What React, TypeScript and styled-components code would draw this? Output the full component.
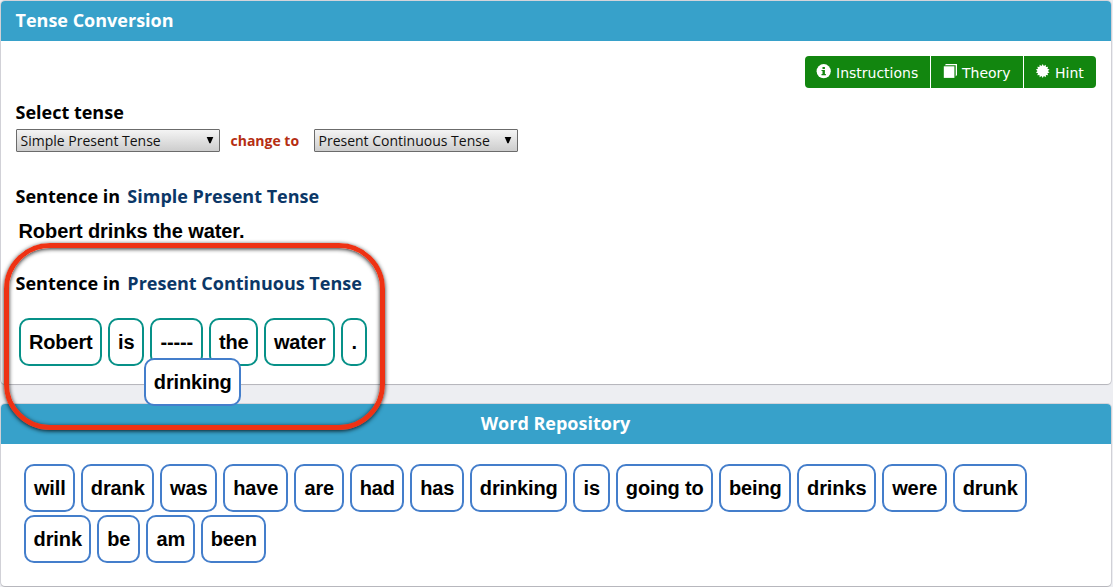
import React from "react";
import styled, { createGlobalStyle } from "styled-components";

const GlobalStyle = createGlobalStyle`
  * { box-sizing: border-box; }
  body {
    margin: 0;
    background: #edeef2;
    font-family: "Open Sans", "Noto Sans", sans-serif;
    color: #000;
  }
`;

const Page = styled.main`
  position: relative;
  display: flex;
  flex-direction: column;
  gap: 20px;
  height: 587px;
  padding: 1px 2px 1px 1px;
  overflow: hidden;
`;

const Panel = styled.section<{ $height: number }>`
  height: ${(p) => p.$height}px;
  background: #fff;
  border-radius: 4px;
  box-shadow: 0 1px 1px rgba(0, 0, 0, 0.15), 0 0 0 1px #d4d4da;
`;

const PanelHeader = styled.h2<{ $center?: boolean }>`
  margin: 0;
  height: 40px;
  padding: ${(p) => (p.$center ? "0 16px 0 15px" : "0 15px 0 14.5px")};
  border-radius: 4px 4px 0 0;
  background: #37a1ca;
  color: #fff;
  font-size: 18px;
  font-weight: 700;
  line-height: 39px;
  text-align: ${(p) => (p.$center ? "center" : "left")};
`;

const PanelBody = styled.div`
  padding: 15px;
`;

const ButtonGroup = styled.div`
  display: flex;
  justify-content: flex-end;
  gap: 1px;
`;

const HelpButton = styled.button<{ $width: number }>`
  display: flex;
  align-items: center;
  gap: 5px;
  width: ${(p) => p.$width}px;
  height: 32px;
  padding: 1px 0 0 11px;
  border: 0;
  background: #12860f;
  color: #fff;
  font: 400 14px/20px "DejaVu Sans", sans-serif;
  white-space: nowrap;
  svg { flex: none; margin-top: -3px; }
  &:first-child { border-radius: 4px 0 0 4px; }
  &:last-child { border-radius: 0 4px 4px 0; }
`;

const Heading = styled.h3<{ $top: number }>`
  display: flex;
  gap: 7.3px;
  margin: ${(p) => p.$top}px 0 0 -0.5px;
  font-size: 18px;
  font-weight: 700;
  line-height: 24px;
  white-space: nowrap;
`;

const TenseName = styled.span`
  color: #0b3767;
`;

const TenseRow = styled.div`
  display: flex;
  align-items: center;
  margin-top: 5px;
`;

const Select = styled.div`
  display: flex;
  align-items: center;
  justify-content: space-between;
  width: 204px;
  height: 23px;
  padding: 0 5px 0 3.5px;
  border: 1px solid #6b6b6b;
  border-radius: 1px;
  background: linear-gradient(#f4f4f4, #cdcdcd);
  color: #111;
  font-size: 14px;
  line-height: 21px;
  white-space: nowrap;
`;

const ChangeTo = styled.span`
  width: 94px;
  padding-left: 10.5px;
  color: #b52e12;
  font-size: 14px;
  font-weight: 700;
  line-height: 20px;
`;

const Sentence = styled.p`
  margin: 11px 0 0 2.5px;
  font: 700 20px/24px "Liberation Sans", Arial, sans-serif;
  letter-spacing: -0.08px;
`;

const Words = styled.div<{ $repository?: boolean }>`
  display: flex;
  flex-wrap: wrap;
  gap: 3px 6px;
  margin: ${(p) => (p.$repository ? "5px 30px 0 8px" : "23px 0 0 3px")};
`;

const Tile = styled.div<{ $width: number; $color: string }>`
  flex: none;
  width: ${(p) => p.$width}px;
  height: 48px;
  padding-left: 0.5px;
  border: 2px solid ${(p) => p.$color};
  border-radius: 10px;
  background: #fff;
  font: 700 20px/44px "Liberation Sans", Arial, sans-serif;
  letter-spacing: -0.12px;
  text-align: center;
  white-space: nowrap;
`;

const DraggedTile = styled(Tile)`
  position: absolute;
  left: 144px;
  top: 358px;
  z-index: 2;
`;

const Callout = styled.div`
  position: absolute;
  z-index: 1;
  left: 4px;
  top: 243px;
  width: 381px;
  height: 187px;
  border: 5px solid #ee3214;
  border-radius: 46px;
  box-shadow: 0 1px 4px rgba(0, 0, 0, 0.85), inset 0 1px 4px rgba(0, 0, 0, 0.85);
  pointer-events: none;
`;

const TEAL = "#079188";
const BLUE = "#447ecb";

const sentenceWords: [string, number][] = [
  ["Robert", 83], ["is", 36], ["-----", 53], ["the", 49], ["water", 71], [".", 26],
];

const repositoryWords: [string, number][] = [
  ["will", 51], ["drank", 73], ["was", 57], ["have", 65], ["are", 50], ["had", 54],
  ["has", 54], ["drinking", 97], ["is", 37], ["going to", 97], ["being", 72],
  ["drinks", 79], ["were", 65], ["drunk", 74], ["drink", 67], ["be", 43],
  ["am", 49], ["been", 65],
];

const InfoIcon = () => (
  <svg width="15" height="15" viewBox="0 0 15 15">
    <circle cx="7.7" cy="7.2" r="7.1" fill="#fff" />
    <path d="M6.5 3h2.4v1.9H6.5zM5.5 5.9h3.4V10h1v1.2H5.5V10h1V7.1h-1z" fill="#12860f" />
  </svg>
);

const BookIcon = () => (
  <svg width="15" height="15" viewBox=".5 0 15 15">
    <path d="M4.5 0h11v11l-1.3 1.6V1.3H3.2z" fill="#fff" />
    <path d="M2.3 2.3h10.6v11.6H2.3z" fill="#fff" />
  </svg>
);

const burstPoints = Array.from({ length: 28 }, (_, i) => {
  const r = i % 2 ? 5.2 : 7;
  const a = (i * Math.PI) / 14;
  return `${(7 + r * Math.sin(a)).toFixed(2)},${(7 - r * Math.cos(a)).toFixed(2)}`;
}).join(" ");

const BurstIcon = () => (
  <svg width="15" height="15" viewBox="-.7 0 15 15">
    <polygon points={burstPoints} fill="#fff" />
  </svg>
);

const Arrow = () => (
  <svg width="8" height="8" viewBox="0 0 8 8">
    <path d="M.7 0h6.6L4.6 6.2H3.4z" fill="#000" />
  </svg>
);

export default function App() {
  return (
    <>
      <GlobalStyle />
      <Page>
        <Panel $height={383}>
          <PanelHeader>Tense Conversion</PanelHeader>
          <PanelBody>
            <ButtonGroup>
              <HelpButton $width={125}><InfoIcon />Instructions</HelpButton>
              <HelpButton $width={92}><BookIcon />Theory</HelpButton>
              <HelpButton $width={72}><BurstIcon />Hint</HelpButton>
            </ButtonGroup>
            <Heading $top={12}>Select tense</Heading>
            <TenseRow>
              <Select>Simple Present Tense<Arrow /></Select>
              <ChangeTo>change to</ChangeTo>
              <Select>Present Continuous Tense<Arrow /></Select>
            </TenseRow>
            <Heading $top={32}>Sentence in <TenseName>Simple Present Tense</TenseName></Heading>
            <Sentence>Robert drinks the water.</Sentence>
            <Heading $top={28}>Sentence in <TenseName>Present Continuous Tense</TenseName></Heading>
            <Words>
              {sentenceWords.map(([word, width]) => (
                <Tile key={word} $width={width} $color={TEAL}>{word}</Tile>
              ))}
            </Words>
          </PanelBody>
        </Panel>
        <Panel $height={182}>
          <PanelHeader $center>Word Repository</PanelHeader>
          <PanelBody>
            <Words $repository>
              {repositoryWords.map(([word, width]) => (
                <Tile key={word} $width={width} $color={BLUE}>{word}</Tile>
              ))}
            </Words>
          </PanelBody>
        </Panel>
        <Callout />
        <DraggedTile $width={97} $color={BLUE}>drinking</DraggedTile>
      </Page>
    </>
  );
}
